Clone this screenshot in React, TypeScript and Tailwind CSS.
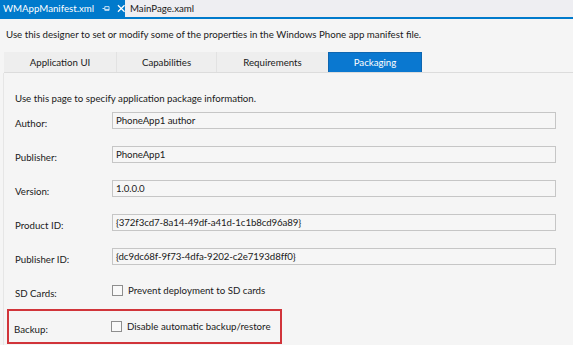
import React from "react";

const font = { fontFamily: 'Lato, "Noto Sans", sans-serif' };

function Field({ label, value }: { label: string; value: string }) {
  return (
    <div className="flex items-center h-[17px]">
      <div className="w-[97px] pt-[6px] text-[9.7px] text-[#1a1a1a]">{label}</div>
      <div className="w-[444px] h-[17px] border border-[#c6c6c6] bg-[#f6f6f6] px-[3px] text-[9.7px] leading-[15px] text-[#1a1a1a] whitespace-nowrap tracking-[-0.1px]">
        {value}
      </div>
    </div>
  );
}

function Check({ label, text }: { label: string; text: string }) {
  return (
    <div className="flex items-center h-[17px]">
      <div className="w-[97px] pt-[6px] text-[9.7px] text-[#1a1a1a]">{label}</div>
      <div className="flex items-center gap-[5px] whitespace-nowrap">
        <div className="w-[11px] h-[11px] border border-[#8e8e8e] bg-[#f9f9f9]" />
        <span className="text-[9.7px] text-[#1a1a1a]">{text}</span>
      </div>
    </div>
  );
}

export default function App() {
  return (
    <div className="w-[573px] h-[345px] overflow-hidden bg-[#f5f5f5] flex flex-col" style={font}>
      <div className="h-[17px] bg-[#eeeef2] flex items-stretch border-b-[2px] border-[#007acc] box-content">
        <div className="bg-[#007acc] text-white text-[9.7px] flex items-center pl-[3px] w-[125px] whitespace-nowrap">
          <span>WMAppManifest.xml</span>
          <svg className="ml-[8px]" width="9" height="9" viewBox="0 0 9 9">
            <path d="M0.5 4.5H3M3 2.5V6.5M3 2.5H7.5V6.5H3M3 5.5H7.5" stroke="#cfe5f7" strokeWidth="1" fill="none" />
          </svg>
          <svg className="ml-[6px]" width="9" height="9" viewBox="0 0 9 9">
            <path d="M1 1L8 8M8 1L1 8" stroke="#ffffff" strokeWidth="1.3" />
          </svg>
        </div>
        <div className="text-[9.7px] text-[#1a1a1a] flex items-center pl-[5px]">MainPage.xaml</div>
      </div>
      <div className="flex-1 flex flex-col">
        <div className="px-[6px] pt-[8px] h-[33px] text-[9.7px] text-[#1a1a1a] whitespace-nowrap">
          Use this designer to set or modify some of the properties in the Windows Phone app manifest file.
        </div>
        <div className="flex h-[21px] border-b border-[#dcdcdc] ml-[4px]">
          <div className="w-[113px] bg-[#eeeeee] border-r border-[#e2e2e2] flex items-center justify-center text-[9.7px] text-[#1a1a1a]">Application UI</div>
          <div className="w-[100px] bg-[#eeeeee] border-r border-[#e2e2e2] flex items-center justify-center text-[9.7px] text-[#1a1a1a]">Capabilities</div>
          <div className="w-[111px] bg-[#eeeeee] flex items-center justify-center text-[9.7px] text-[#1a1a1a]">Requirements</div>
          <div className="w-[94px] bg-[#0a78d0] flex items-center justify-center text-[9.7px] text-white border-x border-t border-[#0e66b0]">Packaging</div>
        </div>
        <div className="flex-1 pl-[14px] pt-[18px] flex flex-col border-l border-[#e6e6e6] ml-[3px]">
          <div className="text-[9.7px] text-[#1a1a1a] h-[20px] -ml-[3px] whitespace-nowrap">Use this page to specify application package information.</div>
          <div className="flex flex-col gap-[17px] -ml-[3px] mt-[1px]">
            <Field label="Author:" value="PhoneApp1 author" />
            <Field label="Publisher:" value="PhoneApp1" />
            <Field label="Version:" value="1.0.0.0" />
            <Field label="Product ID:" value="{372f3cd7-8a14-49df-a41d-1c1b8cd96a89}" />
            <Field label="Publisher ID:" value="{dc9dc68f-9f73-4dfa-9202-c2e7193d8ff0}" />
          </div>
          <div className="mt-[17px] -ml-[3px]">
            <Check label="SD Cards:" text="Prevent deployment to SD cards" />
          </div>
          <div className="mt-[10px] -ml-[11px] w-[275px] h-[35px] border-2 border-[#d1343a] pl-[5px] flex items-center">
            <Check label="Backup:" text="Disable automatic backup/restore" />
          </div>
        </div>
      </div>
    </div>
  );
}
